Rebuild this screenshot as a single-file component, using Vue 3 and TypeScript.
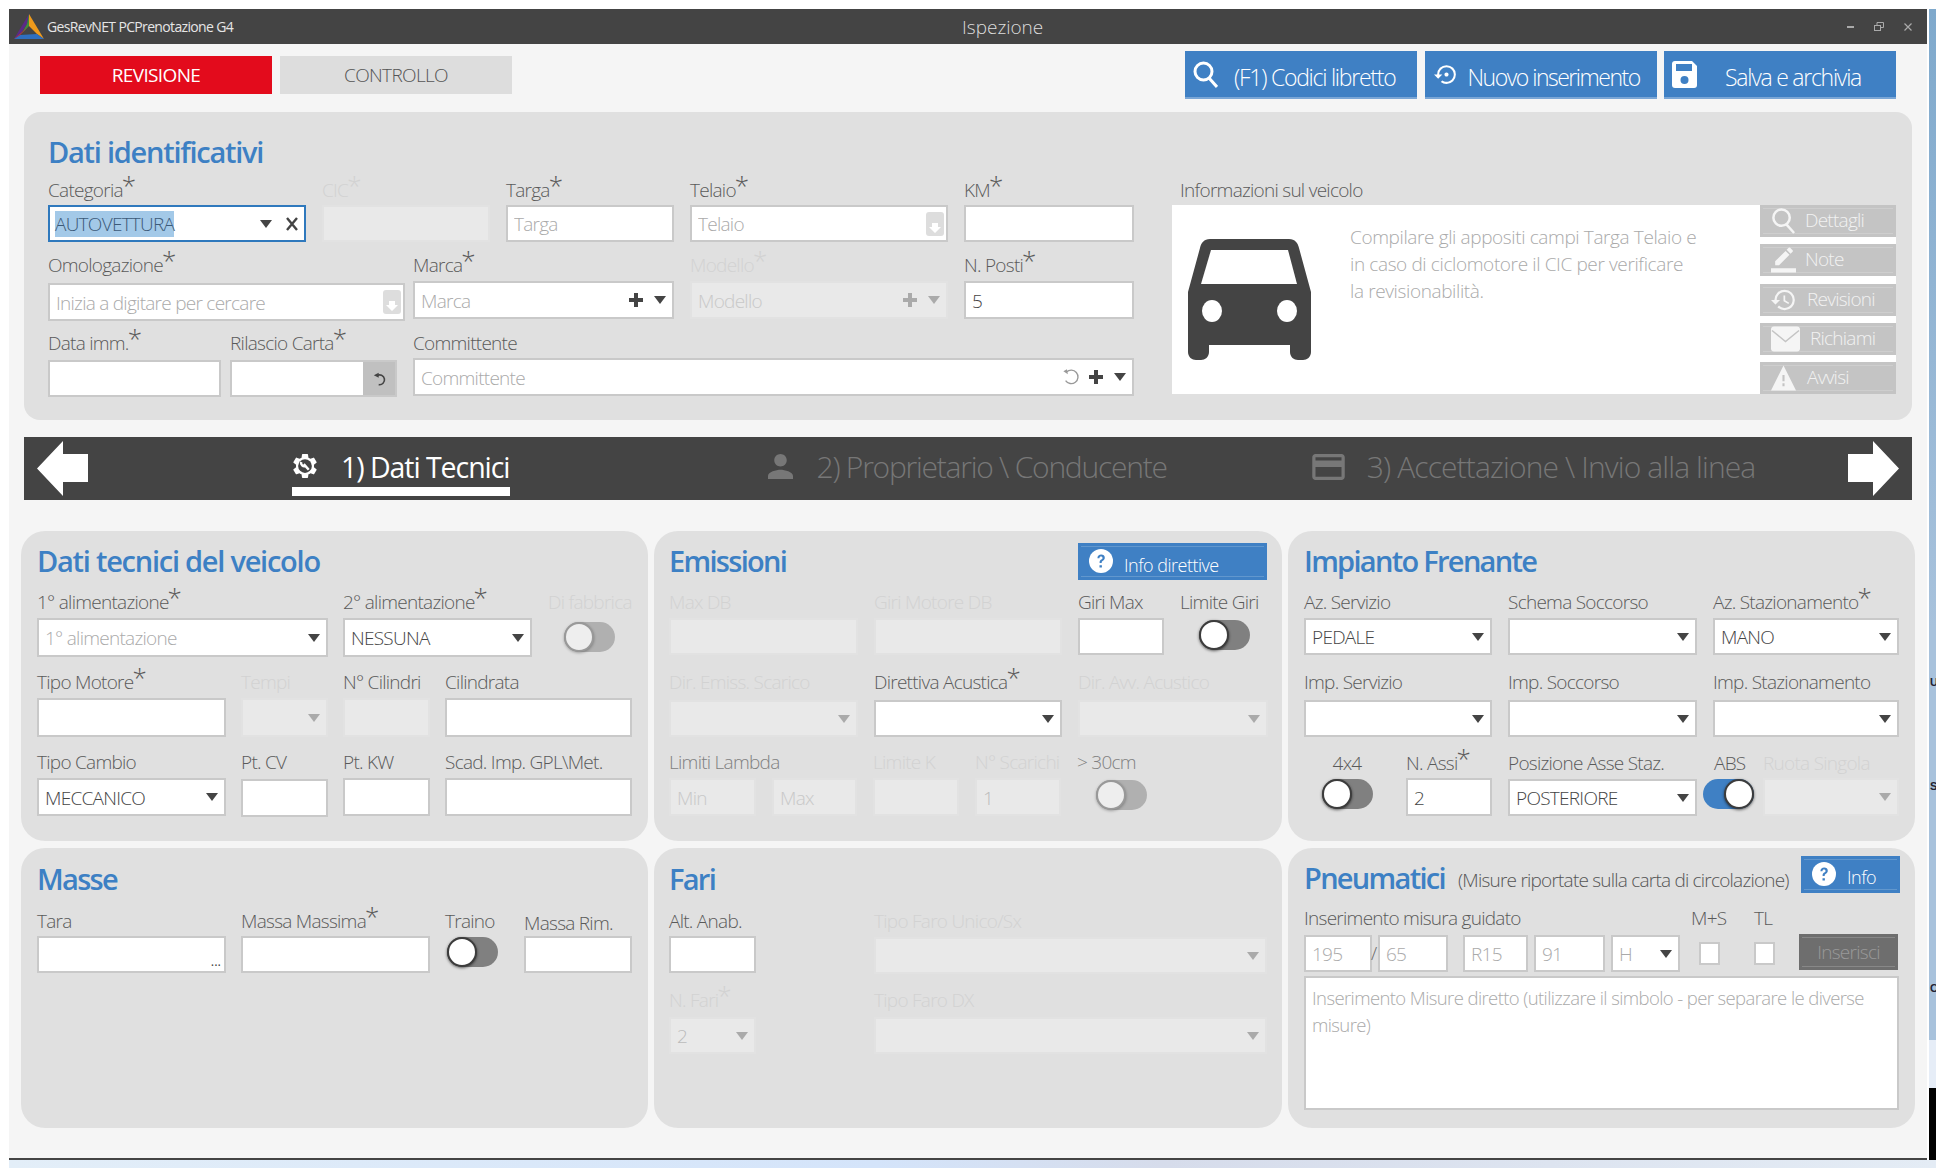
<script setup lang="ts">
type Tool = 'arrow' | 'clear' | 'plus' | 'undo' | 'lookup' | 'reset' | 'dots';

interface Field {
  w: number;
  ml?: number;
  dy?: number;
  h?: number;
  label?: string;
  req?: boolean;
  off?: boolean;
  dim?: boolean;
  soft?: boolean;
  kind?: 'input' | 'toggle' | 'check' | 'button' | 'slash';
  value?: string;
  ph?: string;
  sel?: boolean;
  tools?: Tool[];
  on?: boolean;
  live?: boolean;
  tx?: number;
  center?: boolean;
  lpad?: number;
  ldy?: number;
}

interface Row {
  mt: number;
  lg: number;
  h: number;
  gap: number;
  fields: Field[];
}

interface Panel {
  key: string;
  title: string;
  sub?: string;
  action?: string;
  actionW?: number;
  pl: number;
  pt: number;
  rows: Row[];
  note?: string;
}

const arrow: Tool[] = ['arrow'];

const panels: Panel[] = [
  {
    key: 'id',
    title: 'Dati identificativi',
    pl: 24,
    pt: 18,
    rows: [
      {
        mt: 5, lg: 4, h: 37, gap: 16,
        fields: [
          { w: 258, label: 'Categoria', req: true, value: 'AUTOVETTURA', sel: true, tools: ['arrow', 'clear'] },
          { w: 168, label: 'CIC', req: true, off: true },
          { w: 168, label: 'Targa', req: true, ph: 'Targa' },
          { w: 258, label: 'Telaio', req: true, ph: 'Telaio', tools: ['lookup'] },
          { w: 170, label: 'KM', req: true },
        ],
      },
      {
        mt: 12, lg: 5, h: 38, gap: 16,
        fields: [
          { w: 357, label: 'Omologazione', req: true, ph: 'Inizia a digitare per cercare', tools: ['lookup'], dy: 2 },
          { w: 261, ml: 8, label: 'Marca', req: true, ph: 'Marca', tools: ['plus', 'arrow'] },
          { w: 258, label: 'Modello', req: true, ph: 'Modello', off: true, tools: ['plus', 'arrow'] },
          { w: 170, label: 'N. Posti', req: true, value: '5' },
        ],
      },
      {
        mt: 13, lg: 4, h: 38, gap: 8,
        fields: [
          { w: 173, label: 'Data imm.', req: true, dy: 2, h: 37 },
          { w: 167, ml: 9, label: 'Rilascio Carta', req: true, tools: ['reset'], dy: 2, h: 37 },
          { w: 721, ml: 16, label: 'Committente', ph: 'Committente', tools: ['undo', 'plus', 'arrow'] },
        ],
      },
    ],
  },
  {
    key: 'tecnici',
    title: 'Dati tecnici del veicolo',
    pl: 16,
    pt: 9,
    rows: [
      {
        mt: 7, lg: 5, h: 39, gap: 15,
        fields: [
          { w: 291, label: '1° alimentazione', req: true, ph: '1° alimentazione', tools: arrow },
          { w: 189, label: '2° alimentazione', req: true, value: 'NESSUNA', tools: arrow },
          { w: 84, ml: 16, label: 'Di fabbrica', kind: 'toggle', off: true, tx: 16, dy: 4 },
        ],
      },
      {
        mt: 14, lg: 5, h: 39, gap: 15,
        fields: [
          { w: 189, label: 'Tipo Motore', req: true },
          { w: 87, label: 'Tempi', off: true, tools: arrow },
          { w: 87, label: 'N° Cilindri', off: true, dim: false },
          { w: 187, label: 'Cilindrata' },
        ],
      },
      {
        mt: 14, lg: 5, h: 38, gap: 15,
        fields: [
          { w: 189, label: 'Tipo Cambio', value: 'MECCANICO', tools: arrow },
          { w: 87, label: 'Pt. CV', dy: 1 },
          { w: 87, label: 'Pt. KW' },
          { w: 187, label: 'Scad. Imp. GPL\\Met.' },
        ],
      },
    ],
  },
  {
    key: 'emissioni',
    title: 'Emissioni',
    action: 'Info direttive',
    actionW: 189,
    pl: 15,
    pt: 9,
    rows: [
      {
        mt: 7, lg: 5, h: 37, gap: 16,
        fields: [
          { w: 189, label: 'Max DB', off: true },
          { w: 188, label: 'Giri Motore DB', off: true },
          { w: 86, label: 'Giri Max' },
          { w: 84, label: 'Limite Giri', kind: 'toggle', live: true, tx: 19, dy: 2 },
        ],
      },
      {
        mt: 16, lg: 7, h: 37, gap: 16,
        fields: [
          { w: 189, label: 'Dir. Emiss. Scarico', off: true, tools: arrow },
          { w: 188, label: 'Direttiva Acustica', req: true, tools: arrow },
          { w: 190, label: 'Dir. Avv. Acustico', off: true, tools: arrow },
        ],
      },
      {
        mt: 14, lg: 5, h: 38, gap: 16,
        fields: [
          { w: 87, label: 'Limiti Lambda', dim: false, soft: true, off: true, ph: 'Min' },
          { w: 85, ph: 'Max', off: true },
          { w: 86, label: 'Limite K', off: true },
          { w: 86, label: 'N° Scarichi', off: true, value: '1' },
          { w: 84, label: '> 30cm', dim: false, soft: true, kind: 'toggle', off: true, tx: 19, dy: 2 },
        ],
      },
    ],
  },
  {
    key: 'frenante',
    title: 'Impianto Frenante',
    pl: 16,
    pt: 9,
    rows: [
      {
        mt: 7, lg: 5, h: 37, gap: 16,
        fields: [
          { w: 188, label: 'Az. Servizio', value: 'PEDALE', tools: arrow },
          { w: 189, label: 'Schema Soccorso', tools: arrow },
          { w: 186, ml: 16, label: 'Az. Stazionamento', req: true, value: 'MANO', tools: arrow },
        ],
      },
      {
        mt: 16, lg: 7, h: 37, gap: 16,
        fields: [
          { w: 188, label: 'Imp. Servizio', tools: arrow },
          { w: 189, label: 'Imp. Soccorso', tools: arrow },
          { w: 186, label: 'Imp. Stazionamento', tools: arrow },
        ],
      },
      {
        mt: 15, lg: 4, h: 38, gap: 16,
        fields: [
          { w: 86, label: '4x4', kind: 'toggle', live: true, tx: 18, dy: 1, center: true },
          { w: 86, label: 'N. Assi', req: true, value: '2' },
          { w: 189, label: 'Posizione Asse Staz.', value: 'POSTERIORE', tools: arrow, dy: 1, h: 37 },
          { w: 50, ml: 6, label: 'ABS', kind: 'toggle', live: true, on: true, dy: 1, lpad: 11 },
          { w: 136, ml: 10, label: 'Ruota Singola', off: true, tools: arrow },
        ],
      },
    ],
  },
  {
    key: 'masse',
    title: 'Masse',
    pl: 16,
    pt: 10,
    rows: [
      {
        mt: 8, lg: 4, h: 37, gap: 15,
        fields: [
          { w: 189, label: 'Tara', tools: ['dots'] },
          { w: 189, label: 'Massa Massima', req: true },
          { w: 64, label: 'Traino', kind: 'toggle', live: true, tx: 2, dy: 1 },
          { w: 108, label: 'Massa Rim.', ldy: 2 },
        ],
      },
    ],
  },
  {
    key: 'fari',
    title: 'Fari',
    pl: 15,
    pt: 10,
    rows: [
      {
        mt: 8, lg: 4, h: 37, gap: 118,
        fields: [
          { w: 87, label: 'Alt. Anab.' },
          { w: 393, label: 'Tipo Faro Unico/Sx', off: true, tools: arrow, dy: 1 },
        ],
      },
      {
        mt: 16, lg: 6, h: 37, gap: 118,
        fields: [
          { w: 87, label: 'N. Fari', req: true, off: true, value: '2', tools: arrow },
          { w: 393, label: 'Tipo Faro DX', off: true, tools: arrow },
        ],
      },
    ],
  },
  {
    key: 'pneumatici',
    title: 'Pneumatici',
    sub: '(Misure riportate sulla carta di circolazione)',
    action: 'Info',
    actionW: 99,
    pl: 16,
    pt: 9,
    rows: [
      {
        mt: 6, lg: 6, h: 37, gap: 6,
        fields: [
          { w: 68, label: 'Inserimento misura guidato', ph: '195' },
          { w: 0, ml: 0, kind: 'slash' },
          { w: 70, ph: '65' },
          { w: 65, ml: 15, ph: 'R15' },
          { w: 71, ph: '91' },
          { w: 69, ph: 'H', tools: arrow },
          { w: 40, ml: 11, label: 'M+S', kind: 'check', tx: 8, dy: 7 },
          { w: 21, ml: 23, label: 'TL', kind: 'check', dy: 7 },
          { w: 99, ml: 24, kind: 'button', value: 'Inserisci', dy: -1, h: 36 },
        ],
      },
    ],
    note: 'Inserimento Misure diretto (utilizzare il simbolo - per separare le diverse misure)',
  },
];

const fieldStyle = (f: Field, row: Row, i: number) => ({
  width: `${f.w}px`,
  marginLeft: i === 0 ? '0' : `${f.ml ?? row.gap}px`,
});

const rowStyle = (row: Row) => ({
  marginTop: `${row.mt}px`,
  height: `${22 + row.lg + row.h}px`,
});

const sideButtons = [
  { text: 'Dettagli', icon: 'search', pad: 9 },
  { text: 'Note', icon: 'note', pad: 9 },
  { text: 'Revisioni', icon: 'history', pad: 11 },
  { text: 'Richiami', icon: 'mail', pad: 10 },
  { text: 'Avvisi', icon: 'warn', pad: 11 },
];
</script>

<template>
  <div class="desktop">
    <div class="upper">
      <main class="window">
        <header class="titlebar">
          <svg class="logo" viewBox="0 0 30 25">
            <polygon points="15,0 0,25 6,21 13,10" fill="#5b2a86" />
            <polygon points="15,0 13,10 8,19 15,12" fill="#3f8f3c" />
            <polygon points="15,0 30,25 23,20 15,12" fill="#ee9a1c" />
            <polygon points="0,25 30,25 23,20 6,21" fill="#2f6fc0" />
            <polygon points="0,25 15,12 8,19 6,21" fill="#c9362c" />
          </svg>
          <span class="app-name">GesRevNET PCPrenotazione G4</span>
          <span class="win-title">Ispezione</span>
          <span class="win-btns">
            <svg width="7" height="3" viewBox="0 0 7 3"><rect width="7" height="2" y="1" fill="#aaa" /></svg>
            <svg width="10" height="9" viewBox="0 0 10 9" fill="none" stroke="#aaa"><rect x=".5" y="3.5" width="6" height="5" /><path d="M3 3V.5h6.5v5H7" /></svg>
            <svg width="8" height="8" viewBox="0 0 8 8" stroke="#aaa" stroke-width="1.2"><path d="M.5.5l7 7M7.5.5l-7 7" /></svg>
          </span>
        </header>

        <div class="toolbar">
          <button class="mode active">REVISIONE</button>
          <button class="mode">CONTROLLO</button>
          <span class="spacer"></span>
          <button class="tool">
            <svg class="ic search" viewBox="0 0 25 27" fill="none" stroke="#fff" stroke-width="3"><circle cx="10.5" cy="10.5" r="8.5" /><path d="M16 17l8 9" /></svg>
            <span class="t1">(F1) Codici libretto</span>
          </button>
          <button class="tool">
            <svg class="ic restore" viewBox="0 0 24 24" fill="#fff"><path d="M14 12c0-1.1-.9-2-2-2s-2 .9-2 2 .9 2 2 2 2-.9 2-2zm-2-9a9 9 0 0 0-9 9H0l4 4 4-4H5c0-3.87 3.13-7 7-7s7 3.13 7 7-3.13 7-7 7c-1.51 0-2.91-.49-4.06-1.3l-1.42 1.44A8.9 8.9 0 0 0 12 21a9 9 0 0 0 0-18z" /></svg>
            <span class="t2">Nuovo inserimento</span>
          </button>
          <button class="tool">
            <svg class="ic save" viewBox="0 0 25 27"><path d="M3 0h17l5 5v19a3 3 0 0 1-3 3H3a3 3 0 0 1-3-3V3a3 3 0 0 1 3-3z" fill="#fff" /><rect x="4" y="3" width="16" height="7" fill="#3f80c4" /><circle cx="12.5" cy="19" r="4" fill="#3f80c4" /></svg>
            <span class="t3">Salva e archivia</span>
          </button>
        </div>

        <div class="sheet">
          <template v-for="p in panels" :key="p.key">
            <section class="panel" :class="`p-${p.key}`" :style="{ paddingLeft: `${p.pl}px`, paddingTop: `${p.pt}px` }">
              <div class="panel-head">
                <h2>{{ p.title }}</h2>
                <span v-if="p.sub" class="sub">{{ p.sub }}</span>
                <button v-if="p.action" class="info framed" :style="{ width: `${p.actionW}px` }">
                  <svg viewBox="0 0 24 24" class="qm"><circle cx="12" cy="12" r="12" fill="#fff" /><path d="M8.4 9.2c.1-2.3 1.6-3.6 3.8-3.6 2.1 0 3.6 1.2 3.6 3.1 0 1.5-.8 2.3-1.9 3-.9.6-1.2 1-1.2 1.9v.5h-2.1v-.7c0-1.4.5-2.1 1.6-2.8.9-.6 1.3-1 1.3-1.7 0-.8-.6-1.4-1.5-1.4-1 0-1.5.6-1.6 1.7H8.4zM10.5 16.2h2.4v2.4h-2.4z" fill="#3f80c4" /></svg>
                  <span>{{ p.action }}</span>
                </button>
              </div>

              <div class="body">
                <div class="form">
                  <div v-for="(row, ri) in p.rows" :key="ri" class="row" :style="rowStyle(row)">
                    <div v-for="(f, fi) in row.fields" :key="fi" class="field" :class="{ off: f.off && f.dim !== false, center: f.center, soft: f.soft }" :style="fieldStyle(f, row, fi)">
                      <label class="lbl" :style="{ marginBottom: `${row.lg}px`, paddingLeft: `${f.lpad ?? 0}px`, top: `${f.ldy ?? 0}px` }">
                        {{ f.label }}<i v-if="f.req" class="req">*</i>
                      </label>

                      <span v-if="f.kind === 'slash'" class="slash">/</span>

                      <span v-else-if="f.kind === 'toggle'" class="toggle" :class="{ live: f.live, on: f.on }" :style="{ marginTop: `${f.dy ?? 0}px`, marginLeft: `${f.tx ?? 0}px` }">
                        <i></i>
                      </span>

                      <span v-else-if="f.kind === 'check'" class="check" :style="{ marginTop: `${f.dy ?? 0}px`, marginLeft: `${f.tx ?? 0}px` }"></span>

                      <button v-else-if="f.kind === 'button'" class="insert framed" :style="{ marginTop: `${f.dy ?? 0}px`, height: `${f.h ?? row.h}px` }">
                        <span>{{ f.value }}</span>
                      </button>

                      <div v-else class="ctl" :class="{ disabled: f.off, focus: f.sel }" :style="{ marginTop: `${f.dy ?? 0}px`, height: `${f.h ?? row.h}px` }">
                        <span v-if="f.sel" class="picked"><mark>{{ f.value }}</mark></span>
                        <input v-else readonly tabindex="-1" :value="f.value" :placeholder="f.ph" />
                        <template v-for="tool in f.tools" :key="tool">
                          <i v-if="tool === 'arrow'" class="arrow"></i>
                          <svg v-else-if="tool === 'clear'" class="clear" viewBox="0 0 12 14" stroke="#444" stroke-width="2.4" fill="none"><path d="M1 1l10 12M11 1L1 13" /></svg>
                          <svg v-else-if="tool === 'plus'" class="plus" viewBox="0 0 14 14"><path d="M5 0h4v5h5v4H9v5H5V9H0V5h5z" /></svg>
                          <svg v-else-if="tool === 'undo'" class="undo" viewBox="0 0 20 20" fill="none" stroke="#999" stroke-width="1.5"><path d="M5 4.5A7.5 7.5 0 1 1 4 14" /><path d="M1.5 3.5L5.5 1.500 6.5 7z" fill="#999" stroke="none" /></svg>
                          <svg v-else-if="tool === 'lookup'" class="lookup" viewBox="0 0 18 24"><path d="M3 0h12a3 3 0 0 1 3 3v18a3 3 0 0 1-3 3H3a3 3 0 0 1-3-3V3a3 3 0 0 1 3-3z" fill="#ddd" /><path d="M6 11h6v4h3l-6 6-6-6h3z" fill="#fff" /></svg>
                          <span v-else-if="tool === 'reset'" class="reset">
                            <svg viewBox="0 0 16 18" fill="none" stroke="#444" stroke-width="2"><path d="M5 5.5a6 6 0 1 1 2 11" /><path d="M1 5l6-3v6z" fill="#444" stroke="none" /></svg>
                          </span>
                          <span v-else class="dots">...</span>
                        </template>
                      </div>
                    </div>
                  </div>
                  <textarea v-if="p.note" class="note" readonly tabindex="-1" :placeholder="p.note"></textarea>
                </div>

                <div v-if="p.key === 'id'" class="vehicle">
                  <label class="lbl vehicle-lbl">Informazioni sul veicolo</label>
                  <div class="vehicle-box">
                    <svg class="car" viewBox="0 0 123 121">
                      <path d="M22 0H101C107 0 110 4 111 9L123 53V113C123 118 119 121 115 121H110C106 121 102 118 102 113V106H21V113C21 118 17 121 13 121H8C4 121 0 118 0 113V53L12 9C13 4 16 0 22 0Z" fill="#444" />
                      <polygon points="23,11 100,11 109,45 13,45" fill="#fff" />
                      <ellipse cx="24" cy="72" rx="10" ry="11" fill="#fff" />
                      <ellipse cx="99" cy="72" rx="10" ry="11" fill="#fff" />
                    </svg>
                    <p class="hint">Compilare gli appositi campi Targa Telaio e<br />in caso di ciclomotore il CIC per verificare<br />la revisionabilità.</p>
                    <div class="side">
                      <button v-for="b in sideButtons" :key="b.text" class="side-btn framed">
                        <svg v-if="b.icon === 'search'" viewBox="0 0 24 27" fill="none" stroke="#f5f5f5" stroke-width="2.6"><circle cx="10" cy="10" r="8.5" /><path d="M15 17l8 9" /></svg>
                        <svg v-else-if="b.icon === 'note'" viewBox="0 0 24 24" fill="#f5f5f5"><path d="M17.75 7 14 3.25l-10 10V17h3.75l10-10zm2.96-2.96a.996.996 0 0 0 0-1.41L18.37.29a.996.996 0 0 0-1.41 0L15 2.25 18.75 6l1.96-1.96zM0 20h24v4H0z" /></svg>
                        <svg v-else-if="b.icon === 'history'" viewBox="1 3 22 18" fill="#f5f5f5"><path d="M13 3a9 9 0 0 0-9 9H1l3.89 3.89.07.14L9 12H6c0-3.87 3.13-7 7-7s7 3.13 7 7-3.13 7-7 7c-1.93 0-3.68-.79-4.94-2.06l-1.42 1.42A8.954 8.954 0 0 0 13 21a9 9 0 0 0 0-18zm-1 5v5l4.28 2.54.72-1.21-3.5-2.08V8H12z" /></svg>
                        <svg v-else-if="b.icon === 'mail'" class="wide" viewBox="0 0 29 25"><rect width="29" height="25" rx="3" fill="#f5f5f5" /><path d="M1 4l13.5 11L28 4" fill="none" stroke="#c4c4c4" stroke-width="1.5" /></svg>
                        <svg v-else viewBox="0 0 24 24" fill="#f5f5f5"><path d="M0 24L12 0l12 24zm13-4v-3h-2v3zm0-5V9h-2v6z" /></svg>
                        <span :style="{ marginLeft: `${b.pad}px` }">{{ b.text }}</span>
                      </button>
                    </div>
                  </div>
                </div>
              </div>
            </section>

            <nav v-if="p.key === 'id'" class="stepper">
              <svg class="nav-arrow" viewBox="0 0 51 55" fill="#fff"><path d="M0 27.5L26 0v13h25v28H26v14z" /></svg>
              <div class="step current">
                <svg viewBox="0 0 24 24"><path fill="#fff" d="M19.14 12.94c.04-.3.06-.61.06-.94 0-.32-.02-.64-.07-.94l2.03-1.58a.49.49 0 0 0 .12-.61l-1.92-3.32a.488.488 0 0 0-.59-.22l-2.39.96c-.5-.38-1.03-.7-1.62-.94l-.36-2.54a.484.484 0 0 0-.48-.41h-3.84c-.24 0-.43.17-.47.41l-.36 2.54c-.59.24-1.13.57-1.62.94l-2.39-.96c-.22-.08-.47 0-.59.22L2.74 8.87c-.12.21-.08.47.12.61l2.03 1.58c-.05.3-.09.63-.09.94s.02.64.07.94l-2.03 1.58a.49.49 0 0 0-.12.61l1.92 3.32c.12.22.37.29.59.22l2.39-.96c.5.38 1.03.7 1.62.94l.36 2.54c.05.24.24.41.48.41h3.84c.24 0 .44-.17.47-.41l.36-2.54c.59-.24 1.13-.56 1.62-.94l2.39.96c.22.08.47 0 .59-.22l1.92-3.32c.12-.22.07-.47-.12-.61l-2.01-1.58z" /><circle cx="12" cy="12" r="5.5" fill="#444" /><path d="M15 15l-4-4.5M9 8.8a2.6 2.6 0 0 0 3.5 3.2" stroke="#fff" stroke-width="2" fill="none" /></svg>
                <span>1) Dati Tecnici</span>
              </div>
              <div class="step s2">
                <svg viewBox="4 4 16 16" fill="#777"><path d="M12 12c2.21 0 4-1.79 4-4s-1.79-4-4-4-4 1.79-4 4 1.79 4 4 4zm0 2c-2.67 0-8 1.34-8 4v2h16v-2c0-2.66-5.33-4-8-4z" /></svg>
                <span>2) Proprietario \ Conducente</span>
              </div>
              <div class="step s3">
                <svg viewBox="2 4 20 16" fill="#777"><path d="M20 4H4c-1.11 0-1.99.89-1.99 2L2 18c0 1.11.89 2 2 2h16c1.11 0 2-.89 2-2V6c0-1.11-.89-2-2-2zm0 14H4v-6h16v6zm0-10H4V6h16v2z" /></svg>
                <span>3) Accettazione \ Invio alla linea</span>
              </div>
              <svg class="nav-arrow right" viewBox="0 0 51 55" fill="#fff"><path d="M51 27.5L25 0v13H0v28h25v14z" /></svg>
            </nav>
          </template>
        </div>
      </main>

      <aside class="wallpaper">
        <span class="blue">
          <b class="u">U</b>
          <b class="s">S</b>
          <b class="c">C</b>
        </span>
        <span class="pale"></span>
        <span class="black"></span>
      </aside>
    </div>
    <div class="ground"></div>
  </div>
</template>

<style>
html,
body {
  margin: 0;
  background: #fff;
}
</style>

<style scoped>
* {
  box-sizing: border-box;
}

.desktop {
  width: 1936px;
  height: 1168px;
  padding: 9px 0 0 9px;
  overflow: hidden;
  background: #fff;
  font-family: "Open Sans", "Noto Sans", sans-serif;
  font-weight: 300;
  color: #444;
}

.upper {
  display: flex;
  height: 1151px;
}

.window {
  width: 1918px;
  height: 1151px;
  background: #f5f5f5;
  border-bottom: 2px solid #444;
}

.wallpaper {
  width: 7px;
  margin-left: 2px;
  display: flex;
  flex-direction: column;
}

.blue {
  position: relative;
  height: 1031px;
  background: linear-gradient(180deg, #7fa9cc 0%, #a8c2dc 60%);
}

.blue b {
  position: absolute;
  left: 1px;
  font: 700 11px "Liberation Sans", sans-serif;
  color: #223;
}

.u { top: 667px; }
.s { top: 771px; }
.c { top: 973px; }

.pale {
  height: 48px;
  background: #e6edf7;
}

.black {
  flex: 1;
  background: #000;
}

.ground {
  height: 8px;
  background: linear-gradient(90deg, #e3eef8 0%, #d4e4fa 45%, #d6dceb 60%, #e4ecf5 100%);
}

.titlebar {
  position: relative;
  display: flex;
  align-items: center;
  height: 35px;
  padding-left: 5px;
  background: #444;
  color: #e6e6e6;
}

.logo {
  width: 30px;
  height: 25px;
}

.app-name {
  margin-left: 3px;
  font-size: 14px;
  font-weight: 400;
  letter-spacing: -0.65px;
}

.win-title {
  position: absolute;
  left: 953px;
  top: 5px;
  font-size: 19px;
  color: #ddd;
}

.win-btns {
  margin-left: auto;
  margin-right: 15px;
  display: flex;
  align-items: center;
  gap: 20px;
}

.toolbar {
  display: flex;
  align-items: center;
  height: 62px;
  padding: 0 31px;
}

button {
  position: relative;
  border: 0;
  font: inherit;
  padding: 0;
}

.framed::before {
  content: "";
  position: absolute;
  inset: 3px;
  border-top: 1px solid rgba(255, 255, 255, 0.18);
  border-bottom: 1px solid rgba(255, 255, 255, 0.18);
  pointer-events: none;
}

.mode {
  width: 232px;
  height: 38px;
  margin-right: 8px;
  background: #ddd;
  color: #555;
  font-size: 19px;
  letter-spacing: -0.65px;
}

.mode.active {
  background: #e30b1c;
  color: #fff;
  font-weight: 400;
}

.spacer {
  flex: 1;
}

.tool {
  display: flex;
  align-items: center;
  width: 232px;
  height: 48px;
  margin-left: 7.5px;
  background: #3f80c4;
  border-bottom: 2px solid #7aa6d6;
  color: #fff;
  font-size: 23px;
  letter-spacing: -1.25px;
}

.tool span {
  padding-top: 5px;
}

.ic {
  flex: none;
  margin-left: 8px;
}

.search {
  width: 25px;
  height: 27px;
}

.restore {
  width: 25px;
  height: 25px;
  margin-left: 9px;
}

.save {
  width: 25px;
  height: 27px;
}

.t1 { margin-left: 16px; }
.t2 { margin-left: 9px; letter-spacing: -1.5px; }
.t3 { margin-left: 28px; }

.sheet {
  display: grid;
  grid-template-columns: 627px 628px 627px;
  column-gap: 6px;
  margin: 0 12px;
}

.panel {
  height: 310px;
  background: #e0e0e0;
  border-radius: 24px;
}

.p-id {
  grid-column: 1 / -1;
  height: 308px;
  margin: 6px 3px 0;
  border-radius: 16px;
}

.p-masse,
.p-fari,
.p-pneumatici {
  height: 280px;
  margin-top: 7px;
}

.panel-head {
  display: flex;
  align-items: flex-start;
  height: 44px;
}

h2 {
  position: relative;
  top: -1px;
  margin: 0;
  font-size: 29px;
  font-weight: 600;
  line-height: 44px;
  color: #3d80c4;
  letter-spacing: -1.7px;
}

.p-id h2 {
  top: 0;
}

.p-id h2,
.p-tecnici h2 {
  letter-spacing: -1.25px;
}

.sub {
  margin-left: 13px;
  font-size: 19px;
  line-height: 46px;
  letter-spacing: -0.78px;
  color: #555;
}

.info {
  display: flex;
  align-items: center;
  height: 37px;
  margin-top: 3px;
  margin-left: auto;
  margin-right: 15px;
  padding-left: 11px;
  background: #3f80c4;
  color: #fff;
  font-size: 18px;
  letter-spacing: -0.5px;
}

.p-pneumatici .info {
  margin-top: -1px;
  margin-right: 15px;
}

.info span {
  margin-left: 11px;
  padding-top: 7px;
}

.p-pneumatici .info span {
  padding-top: 4px;
}

.qm {
  width: 24px;
  height: 24px;
  margin-top: -1px;
}

.body {
  display: flex;
}

.form {
  flex: none;
}

.p-id .form {
  width: 1086px;
}

.row {
  display: flex;
  align-items: flex-start;
}

.field {
  flex: none;
  display: flex;
  flex-direction: column;
  align-items: flex-start;
}

.field.center .lbl {
  align-self: center;
  padding-left: 0;
}

.lbl {
  position: relative;
  display: block;
  height: 22px;
  line-height: 22px;
  font-size: 19px;
  letter-spacing: -0.73px;
  white-space: nowrap;
  color: #5a5a5a;
}

.field.off .lbl {
  color: #d2d2d2;
}

.field.soft .lbl {
  color: #808080;
}

.req {
  position: relative;
  top: -2px;
  margin-left: -1px;
  font-size: 26px;
  font-style: normal;
  line-height: 0;
}

.ctl {
  display: flex;
  align-items: center;
  width: 100%;
  overflow: hidden;
  background: #fff;
  border: 2px solid #c9c9c9;
}

.ctl.disabled {
  background: #e9e9e9;
  border-color: #e2e2e2;
}

.ctl.focus {
  border-color: #2f79bd;
}

input {
  flex: 1;
  min-width: 0;
  height: 100%;
  padding: 1px 0 0 6px;
  border: 0;
  outline: 0;
  background: transparent;
  font: inherit;
  font-size: 19px;
  letter-spacing: -0.73px;
  color: #444;
}

input::placeholder,
.note::placeholder {
  color: #aaa;
  opacity: 1;
}

.disabled input {
  color: #bbb;
}

.disabled input::placeholder {
  color: #c8c8c8;
}

.picked {
  flex: 1;
  padding-left: 5px;
  font-size: 19px;
  letter-spacing: -0.73px;
}

mark {
  display: inline-block;
  height: 26px;
  line-height: 26px;
  background: #a3c9e8;
  color: #3c5a78;
}

.arrow {
  flex: none;
  width: 0;
  height: 0;
  margin-right: 6px;
  border-style: solid;
  border-width: 8px 6px 0;
  border-color: #444 transparent transparent;
}

.disabled .arrow {
  border-top-color: #aaa;
}

.clear {
  flex: none;
  width: 12px;
  height: 14px;
  margin: 0 6px 0 8px;
}

.plus {
  flex: none;
  width: 14px;
  height: 14px;
  margin-right: 11px;
  fill: #444;
}

.disabled .plus {
  fill: #aaa;
}

.undo {
  flex: none;
  width: 18px;
  height: 18px;
  margin-right: 9px;
}

.lookup {
  flex: none;
  width: 18px;
  height: 24px;
  margin-right: 2px;
}

.reset {
  display: flex;
  align-items: center;
  justify-content: center;
  flex: none;
  width: 32px;
  height: 100%;
  background: #c0c0c0;
}

.reset svg {
  width: 13px;
  height: 15px;
}

.dots {
  align-self: flex-end;
  margin-right: 3px;
  font-size: 13px;
  font-weight: 400;
  line-height: 20px;
  color: #444;
}

.slash {
  position: relative;
  left: -1px;
  margin-top: 6px;
  font-size: 18px;
  color: #666;
}

.toggle {
  position: relative;
  display: block;
  width: 51px;
  height: 30px;
  border-radius: 15px;
  background: #b0b0b0;
}

.toggle i {
  position: absolute;
  left: 0;
  top: 0;
  width: 30px;
  height: 30px;
  border-radius: 50%;
  background: #eee;
  border: 2px solid #999;
  box-shadow: 0 1px 3px rgba(0, 0, 0, 0.3);
}

.toggle.live {
  background: #808080;
}

.toggle.live i {
  background: #fff;
  border-color: #3c3c3c;
  box-shadow: 0 1px 3px rgba(0, 0, 0, 0.6);
}

.toggle.on {
  background: #3f80c4;
}

.toggle.on i {
  left: 21px;
}

.check {
  display: block;
  width: 21px;
  height: 23px;
  background: #fff;
  border: 2px solid #c9c9c9;
}

.insert {
  width: 100%;
  background: #6e6e6e;
  color: #999;
  font-size: 19px;
  letter-spacing: -0.73px;
}

.note {
  display: block;
  width: 595px;
  height: 134px;
  margin-top: 4px;
  padding: 6px 6px;
  resize: none;
  outline: 0;
  background: #fff;
  border: 2px solid #c9c9c9;
  font: inherit;
  font-size: 18.5px;
  line-height: 27px;
  letter-spacing: -0.6px;
  overflow: hidden;
}

.vehicle {
  margin-left: 38px;
  margin-top: 5px;
  width: 724px;
}

.vehicle-lbl {
  margin: 0 0 4px 8px;
}

.vehicle-box {
  display: flex;
  height: 189px;
  background: #fff;
}

.car {
  flex: none;
  width: 123px;
  height: 121px;
  margin: 34px 0 0 16px;
}

.hint {
  flex: 1;
  margin: 19px 0 0 39px;
  font-size: 19px;
  line-height: 27px;
  letter-spacing: -0.38px;
  color: #aaa;
}

.side {
  flex: none;
  display: flex;
  flex-direction: column;
  justify-content: space-between;
  width: 136px;
}

.side-btn {
  display: flex;
  align-items: center;
  height: 32px;
  padding-left: 11px;
  background: #c4c4c4;
  color: #f2f2f2;
  font-size: 19px;
  letter-spacing: -0.75px;
}

.side-btn span {
  margin-top: -2px;
}

.side-btn svg {
  flex: none;
  width: 25px;
  height: 26px;
}

.side-btn svg.wide {
  width: 29px;
}

.stepper {
  grid-column: 1 / -1;
  position: relative;
  display: flex;
  align-items: center;
  height: 63px;
  margin: 17px 3px 31px;
  padding: 0 13px;
  background: #444;
  color: #777;
  font-size: 30px;
  letter-spacing: -1.24px;
}

.step span {
  margin-top: -4px;
}

.nav-arrow {
  flex: none;
  width: 51px;
  height: 55px;
}

.nav-arrow.right {
  margin-left: auto;
}

.step {
  display: flex;
  align-items: center;
  height: 100%;
  white-space: nowrap;
}

.step svg {
  flex: none;
}

.current {
  position: relative;
  margin-left: 204px;
  color: #fff;
  font-weight: 400;
  font-size: 28.5px;
  letter-spacing: -1.05px;
}

.current svg {
  width: 30px;
  height: 30px;
  margin: -5px 21px 0 -2px;
}

.current::after {
  content: "";
  position: absolute;
  left: 0;
  right: 0;
  bottom: 4px;
  height: 9px;
  background: #fff;
}

.s2 {
  margin-left: 258px;
}

.s2 svg {
  width: 25px;
  height: 25px;
  margin: -4px 24px 0 0;
}

.s3 {
  margin-left: 145px;
  letter-spacing: -0.87px;
}

.s3 svg {
  width: 33px;
  height: 26px;
  margin: -4px 22px 0 0;
}
</style>
